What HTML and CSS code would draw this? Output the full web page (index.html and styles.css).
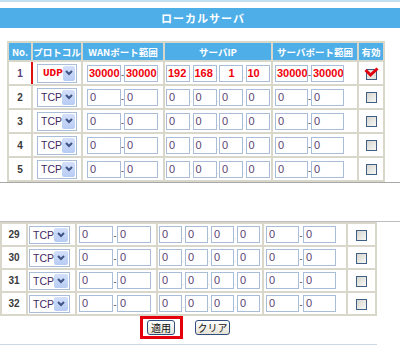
FILE: index.html
```html
<!DOCTYPE html>
<html lang="ja">
<head>
  <meta charset="UTF-8">
  <meta name="viewport" content="width=device-width, initial-scale=1.0">
  <title>ローカルサーバ</title>
  <link rel="stylesheet" href="styles.css">
</head>
<body>
  <div class="topline"></div>
  <div class="titlebar">ローカルサーバ</div>

  <!-- 1~5 -->
  <table class="ports upper">
    <colgroup>
      <col class="c-no"><col class="c-proto"><col class="c-wan"><col class="c-ip"><col class="c-sp"><col class="c-on">
    </colgroup>
    <tr>
      <th>No.</th><th>プロトコル</th><th>WANポート範囲</th><th>サーバIP</th><th>サーバポート範囲</th><th>有効</th>
    </tr>
    <tr class="first">
      <td class="no num1">1</td>
      <td class="proto mark"><span class="sel red mono">UDP<span class="arrow"><svg width="8" height="6" viewBox="0 0 8 6"><polyline points="1,1 4,4 7,1" fill="none" stroke="#3e5484" stroke-width="2"/></svg></span></span></td>
      <td class="wan"><div class="pair"><span class="fld wf red">30000</span><span class="dash">-</span><span class="fld wf red">30000</span></div></td>
      <td class="ip"><div class="pair"><span class="fld ipf red">192</span><span class="dot">.</span><span class="fld ipf red">168</span><span class="dot">.</span><span class="fld ipf red mid">1</span><span class="dot">.</span><span class="fld ipf red">10</span></div></td>
      <td class="sp"><div class="pair"><span class="fld sf red">30000</span><span class="dash">-</span><span class="fld sf red">30000</span></div></td>
      <td class="on"><svg class="checked" width="15" height="13" viewBox="0 0 15 13"><rect x="2.5" y="2.5" width="10" height="10" fill="#e4e4de" stroke="#3d5c82"/><polyline points="1.5,3 6.5,8 13.5,1.5" fill="none" stroke="#e00010" stroke-width="3"/></svg></td>
    </tr>
    <tr>
      <td class="no">2</td>
      <td class="proto"><span class="sel">TCP<span class="arrow"><svg width="8" height="6" viewBox="0 0 8 6"><polyline points="1,1 4,4 7,1" fill="none" stroke="#3e5484" stroke-width="2"/></svg></span></span></td>
      <td class="wan"><div class="pair"><span class="fld wf">0</span><span class="dash">-</span><span class="fld wf">0</span></div></td>
      <td class="ip"><div class="pair"><span class="fld ipf">0</span><span class="dot">.</span><span class="fld ipf">0</span><span class="dot">.</span><span class="fld ipf">0</span><span class="dot">.</span><span class="fld ipf">0</span></div></td>
      <td class="sp"><div class="pair"><span class="fld sf">0</span><span class="dash">-</span><span class="fld sf">0</span></div></td>
      <td class="on"><span class="chk"></span></td>
    </tr>
    <tr>
      <td class="no">3</td>
      <td class="proto"><span class="sel">TCP<span class="arrow"><svg width="8" height="6" viewBox="0 0 8 6"><polyline points="1,1 4,4 7,1" fill="none" stroke="#3e5484" stroke-width="2"/></svg></span></span></td>
      <td class="wan"><div class="pair"><span class="fld wf">0</span><span class="dash">-</span><span class="fld wf">0</span></div></td>
      <td class="ip"><div class="pair"><span class="fld ipf">0</span><span class="dot">.</span><span class="fld ipf">0</span><span class="dot">.</span><span class="fld ipf">0</span><span class="dot">.</span><span class="fld ipf">0</span></div></td>
      <td class="sp"><div class="pair"><span class="fld sf">0</span><span class="dash">-</span><span class="fld sf">0</span></div></td>
      <td class="on"><span class="chk"></span></td>
    </tr>
    <tr>
      <td class="no">4</td>
      <td class="proto"><span class="sel">TCP<span class="arrow"><svg width="8" height="6" viewBox="0 0 8 6"><polyline points="1,1 4,4 7,1" fill="none" stroke="#3e5484" stroke-width="2"/></svg></span></span></td>
      <td class="wan"><div class="pair"><span class="fld wf">0</span><span class="dash">-</span><span class="fld wf">0</span></div></td>
      <td class="ip"><div class="pair"><span class="fld ipf">0</span><span class="dot">.</span><span class="fld ipf">0</span><span class="dot">.</span><span class="fld ipf">0</span><span class="dot">.</span><span class="fld ipf">0</span></div></td>
      <td class="sp"><div class="pair"><span class="fld sf">0</span><span class="dash">-</span><span class="fld sf">0</span></div></td>
      <td class="on"><span class="chk"></span></td>
    </tr>
    <tr>
      <td class="no">5</td>
      <td class="proto"><span class="sel">TCP<span class="arrow"><svg width="8" height="6" viewBox="0 0 8 6"><polyline points="1,1 4,4 7,1" fill="none" stroke="#3e5484" stroke-width="2"/></svg></span></span></td>
      <td class="wan"><div class="pair"><span class="fld wf">0</span><span class="dash">-</span><span class="fld wf">0</span></div></td>
      <td class="ip"><div class="pair"><span class="fld ipf">0</span><span class="dot">.</span><span class="fld ipf">0</span><span class="dot">.</span><span class="fld ipf">0</span><span class="dot">.</span><span class="fld ipf">0</span></div></td>
      <td class="sp"><div class="pair"><span class="fld sf">0</span><span class="dash">-</span><span class="fld sf">0</span></div></td>
      <td class="on"><span class="chk"></span></td>
    </tr>
  </table>

  <div class="cut"></div>

  <!-- 29~32 -->
  <table class="ports lower">
    <colgroup>
      <col class="c-no"><col class="c-proto"><col class="c-wan"><col class="c-ip"><col class="c-sp"><col class="c-on">
    </colgroup>
    <tr>
      <td class="no">29</td>
      <td class="proto"><span class="sel">TCP<span class="arrow"><svg width="8" height="6" viewBox="0 0 8 6"><polyline points="1,1 4,4 7,1" fill="none" stroke="#3e5484" stroke-width="2"/></svg></span></span></td>
      <td class="wan"><div class="pair"><span class="fld wf">0</span><span class="dash">-</span><span class="fld wf">0</span></div></td>
      <td class="ip"><div class="pair"><span class="fld ipf">0</span><span class="dot">.</span><span class="fld ipf">0</span><span class="dot">.</span><span class="fld ipf">0</span><span class="dot">.</span><span class="fld ipf">0</span></div></td>
      <td class="sp"><div class="pair"><span class="fld sf">0</span><span class="dash">-</span><span class="fld sf">0</span></div></td>
      <td class="on"><span class="chk"></span></td>
    </tr>
    <tr>
      <td class="no">30</td>
      <td class="proto"><span class="sel">TCP<span class="arrow"><svg width="8" height="6" viewBox="0 0 8 6"><polyline points="1,1 4,4 7,1" fill="none" stroke="#3e5484" stroke-width="2"/></svg></span></span></td>
      <td class="wan"><div class="pair"><span class="fld wf">0</span><span class="dash">-</span><span class="fld wf">0</span></div></td>
      <td class="ip"><div class="pair"><span class="fld ipf">0</span><span class="dot">.</span><span class="fld ipf">0</span><span class="dot">.</span><span class="fld ipf">0</span><span class="dot">.</span><span class="fld ipf">0</span></div></td>
      <td class="sp"><div class="pair"><span class="fld sf">0</span><span class="dash">-</span><span class="fld sf">0</span></div></td>
      <td class="on"><span class="chk"></span></td>
    </tr>
    <tr>
      <td class="no">31</td>
      <td class="proto"><span class="sel">TCP<span class="arrow"><svg width="8" height="6" viewBox="0 0 8 6"><polyline points="1,1 4,4 7,1" fill="none" stroke="#3e5484" stroke-width="2"/></svg></span></span></td>
      <td class="wan"><div class="pair"><span class="fld wf">0</span><span class="dash">-</span><span class="fld wf">0</span></div></td>
      <td class="ip"><div class="pair"><span class="fld ipf">0</span><span class="dot">.</span><span class="fld ipf">0</span><span class="dot">.</span><span class="fld ipf">0</span><span class="dot">.</span><span class="fld ipf">0</span></div></td>
      <td class="sp"><div class="pair"><span class="fld sf">0</span><span class="dash">-</span><span class="fld sf">0</span></div></td>
      <td class="on"><span class="chk"></span></td>
    </tr>
    <tr>
      <td class="no">32</td>
      <td class="proto"><span class="sel">TCP<span class="arrow"><svg width="8" height="6" viewBox="0 0 8 6"><polyline points="1,1 4,4 7,1" fill="none" stroke="#3e5484" stroke-width="2"/></svg></span></span></td>
      <td class="wan"><div class="pair"><span class="fld wf">0</span><span class="dash">-</span><span class="fld wf">0</span></div></td>
      <td class="ip"><div class="pair"><span class="fld ipf">0</span><span class="dot">.</span><span class="fld ipf">0</span><span class="dot">.</span><span class="fld ipf">0</span><span class="dot">.</span><span class="fld ipf">0</span></div></td>
      <td class="sp"><div class="pair"><span class="fld sf">0</span><span class="dash">-</span><span class="fld sf">0</span></div></td>
      <td class="on"><span class="chk"></span></td>
    </tr>
  </table>

  <div class="buttons">
    <span class="focus"><button type="button" class="btn apply">適用</button></span>
    <button type="button" class="btn clear">クリア</button>
  </div>
</body>
</html>
```

FILE: styles.css
```css
body{
  margin: 0;
  background-color: #fff;
  font-family: "Liberation Sans", "Noto Sans CJK JP", sans-serif;
  font-size: 11px;
  color: #222;
}
.topline{
  height: 2px;
  background-color: #c3e0f3;
}
.titlebar{
  margin-top: 6px;
  height: 20px;
  line-height: 20px;
  padding-left: 6px;
  background-color: #4eaee7;
  color: #fff;
  font-family: "Noto Sans CJK JP", sans-serif;
  font-weight: bold;
  font-size: 11px;
  letter-spacing: 1px;
  text-align: center;
}

/* テーブル */
.ports{
  table-layout: fixed;
  border-collapse: separate;
  border-spacing: 2px;
  background-color: #d9d6ca;
}
.upper{
  width: 378px;
  margin: 13px 0 0 7px;
}
.upper .c-no{ width: 22px; }
.upper .c-proto{ width: 48px; }
.upper .c-wan{ width: 80px; }
.upper .c-ip{ width: 106px; }
.upper .c-sp{ width: 84px; }
.upper .c-on{ width: 24px; }

.lower{
  width: 377px;
  margin: 0;
}
.lower .c-no{ width: 24px; }
.lower .c-proto{ width: 47px; }
.lower .c-wan{ width: 79px; }
.lower .c-ip{ width: 104px; }
.lower .c-sp{ width: 82px; }
.lower .c-on{ width: 27px; }

.ports th{
  height: 17px;
  padding: 0;
  background-color: #4eaee7;
  color: #fff;
  font-family: "Noto Sans CJK JP", sans-serif;
  font-weight: bold;
  font-size: 9.5px;
  letter-spacing: 0;
  white-space: nowrap;
  text-align: center;
}
.ports td{
  height: 22px;
  padding: 0;
  background-color: #fff;
  vertical-align: middle;
}
.lower td{
  height: 21px;
}
.no{
  text-align: center;
  font-size: 10px;
  font-weight: bold;
  color: #3a3a3a;
}
.num1{
  color: #5a3c78;
}
.mark{
  box-shadow: -2px 0 0 #e01010;
}
.proto{
  text-align: center;
}
.lower .proto{
  text-align: left;
  padding-left: 1px;
}
.wan{
  padding-left: 4px !important;
}
.lower .wan{
  padding-left: 2px !important;
}
.ip{
  padding-left: 1px !important;
}
.sp{
  padding-left: 2px !important;
}
.on{
  text-align: center;
}

/* 入力欄 */
.pair{
  display: flex;
  align-items: center;
}
.fld{
  box-sizing: border-box;
  display: inline-block;
  height: 17px;
  line-height: 15px;
  padding-left: 2px;
  border: 1px solid #a9bdd8;
  background-color: #fff;
  font-size: 11px;
  color: #5b3f73;
  white-space: nowrap;
  overflow: hidden;
}
.wf{ width: 34px; }
.sf{ width: 33px; }
.ipf{ width: 24px; }
.lower .ipf{ width: 23px; }
.fld.red{
  color: #f0000a;
  font-weight: bold;
  padding-left: 1px;
}
.fld.mid{
  text-align: center;
}
.dash{
  width: 3px;
  align-self: flex-end;
  font-size: 9px;
  line-height: 9px;
  margin-bottom: 2px;
  text-align: center;
  color: #333;
  overflow: visible;
}
.lower .dash{
  width: 4px;
}
.dot{
  width: 2.5px;
  align-self: flex-end;
  font-size: 8px;
  line-height: 8px;
  margin-bottom: 2px;
  color: #c8c8b0;
  overflow: hidden;
}
.lower .dot{
  width: 3px;
}

/* セレクト */
.sel{
  box-sizing: border-box;
  display: inline-flex;
  align-items: center;
  width: 40px;
  height: 19px;
  padding: 1px 1px 1px 3px;
  border: 1px solid #a9bdd8;
  background-color: #fff;
  font-size: 10.5px;
  color: #3f2a63;
  text-align: left;
  vertical-align: middle;
}
.lower .sel{
  width: 41px;
  height: 18px;
}
.sel.mono{
  font-family: "Liberation Mono", monospace;
  font-size: 11px;
  font-weight: bold;
  color: #f0000a;
  padding-left: 5px;
}
.arrow{
  margin-left: auto;
  width: 14px;
  height: 15px;
  display: flex;
  align-items: center;
  justify-content: center;
  border-radius: 2px;
  background: linear-gradient(#d3e0fb, #b7cbf3);
}
.lower .arrow{
  height: 14px;
}

/* チェックボックス */
.chk{
  box-sizing: border-box;
  display: inline-block;
  width: 11px;
  height: 11px;
  vertical-align: middle;
  border: 1px solid #3f5f86;
  background: linear-gradient(135deg, #d6d5cd, #f8f8f6);
}
.checked{
  vertical-align: middle;
}

.cut{
  height: 38px;
  border-top: 1px solid #a8a8a8;
  border-bottom: 1px solid #bcbcbc;
}

/* ボタン */
.buttons{
  width: 377px;
  box-sizing: border-box;
  padding-right: 7px;
  height: 29px;
  display: flex;
  justify-content: center;
  align-items: flex-start;
  gap: 12px;
  border-bottom: 1px solid #c9d7e4;
}
.focus{
  display: inline-block;
  border: 3px solid #e6000c;
  padding: 1px 5px 1px 4px;
}
.btn{
  box-sizing: border-box;
  height: 15px;
  padding: 0;
  border: 1px solid #2f4d7d;
  border-radius: 3px;
  background: linear-gradient(#ffffff, #e5e2d5);
  font-family: "Noto Sans CJK JP", sans-serif;
  font-size: 10px;
  line-height: 13px;
  color: #111;
  display: block;
}
.apply{
  width: 28px;
}
.clear{
  width: 35px;
  margin-top: 4px;
}
```
